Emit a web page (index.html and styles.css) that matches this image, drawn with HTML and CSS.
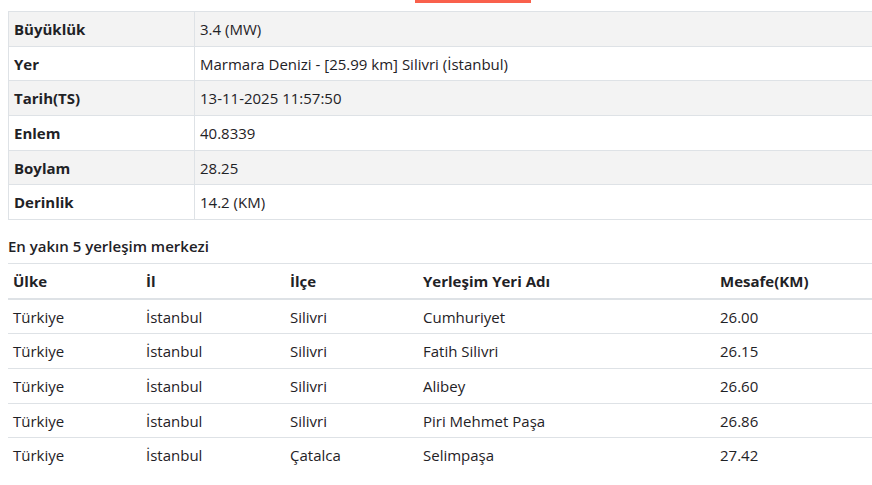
FILE: index.html
```html
<!DOCTYPE html>
<html lang="tr">
<head>
<meta charset="utf-8">
<link rel="stylesheet" href="styles.css">
</head>
<body>
<div class="page">
  <div class="topbar"><div class="btn-edge"></div></div>
  <table class="info">
    <tbody>
      <tr class="odd"><th>Büyüklük</th><td>3.4 (MW)</td></tr>
      <tr><th>Yer</th><td>Marmara Denizi - [25.99 km] Silivri (İstanbul)</td></tr>
      <tr class="odd"><th>Tarih(TS)</th><td>13-11-2025 11:57:50</td></tr>
      <tr><th>Enlem</th><td>40.8339</td></tr>
      <tr class="odd"><th>Boylam</th><td>28.25</td></tr>
      <tr><th>Derinlik</th><td>14.2 (KM)</td></tr>
    </tbody>
  </table>
  <h4 class="title">En yakın 5 yerleşim merkezi</h4>
  <table class="near">
    <thead>
      <tr><th class="c1">Ülke</th><th class="c2">İl</th><th class="c3">İlçe</th><th class="c4">Yerleşim Yeri Adı</th><th>Mesafe(KM)</th></tr>
    </thead>
    <tbody>
      <tr><td>Türkiye</td><td>İstanbul</td><td>Silivri</td><td>Cumhuriyet</td><td>26.00</td></tr>
      <tr><td>Türkiye</td><td>İstanbul</td><td>Silivri</td><td>Fatih Silivri</td><td>26.15</td></tr>
      <tr><td>Türkiye</td><td>İstanbul</td><td>Silivri</td><td>Alibey</td><td>26.60</td></tr>
      <tr><td>Türkiye</td><td>İstanbul</td><td>Silivri</td><td>Piri Mehmet Paşa</td><td>26.86</td></tr>
      <tr><td>Türkiye</td><td>İstanbul</td><td>Çatalca</td><td>Selimpaşa</td><td>27.42</td></tr>
    </tbody>
  </table>
</div>
</body>
</html>
```
FILE: styles.css
```css
html, body { margin: 0; padding: 0; background: #fff; }
body {
  font-family: "Open Sans", "Noto Sans", sans-serif;
  font-size: 15px;
  color: #1f2226;
}
.page { padding-left: 8px; width: 864px; }
.topbar { height: 11px; display: flex; justify-content: flex-start; }
.btn-edge { margin-left: 407px; width: 116px; height: 3px; background: #f9604c; }
table { border-collapse: collapse; width: 100%; }
.info { border: 1px solid #dee2e6; border-right: none; }
.info th, .info td {
  text-align: left;
  padding: 8px 5px 7px 5px;
  line-height: 18.67px;
  border-top: 1px solid #dee2e6;
  vertical-align: middle;
}
.info th { width: 175px; border-right: 1px solid #dee2e6; font-weight: 700; }
.info tr.odd { background: #f3f3f3; }
.title {
  margin: 15px 0 6px 0;
  font-size: 15px;
  font-weight: 600;
  line-height: 22px;
}
.near th, .near td {
  text-align: left;
  padding: 8px 5px 7px 5px;
  line-height: 18.67px;
  border-top: 1px solid #dee2e6;
}
.near thead th { border-bottom: 2px solid #dee2e6; font-weight: 700; }
.near .c1 { width: 123px; }
.near .c2 { width: 134px; }
.near .c3 { width: 123px; }
.near .c4 { width: 287px; }
```
